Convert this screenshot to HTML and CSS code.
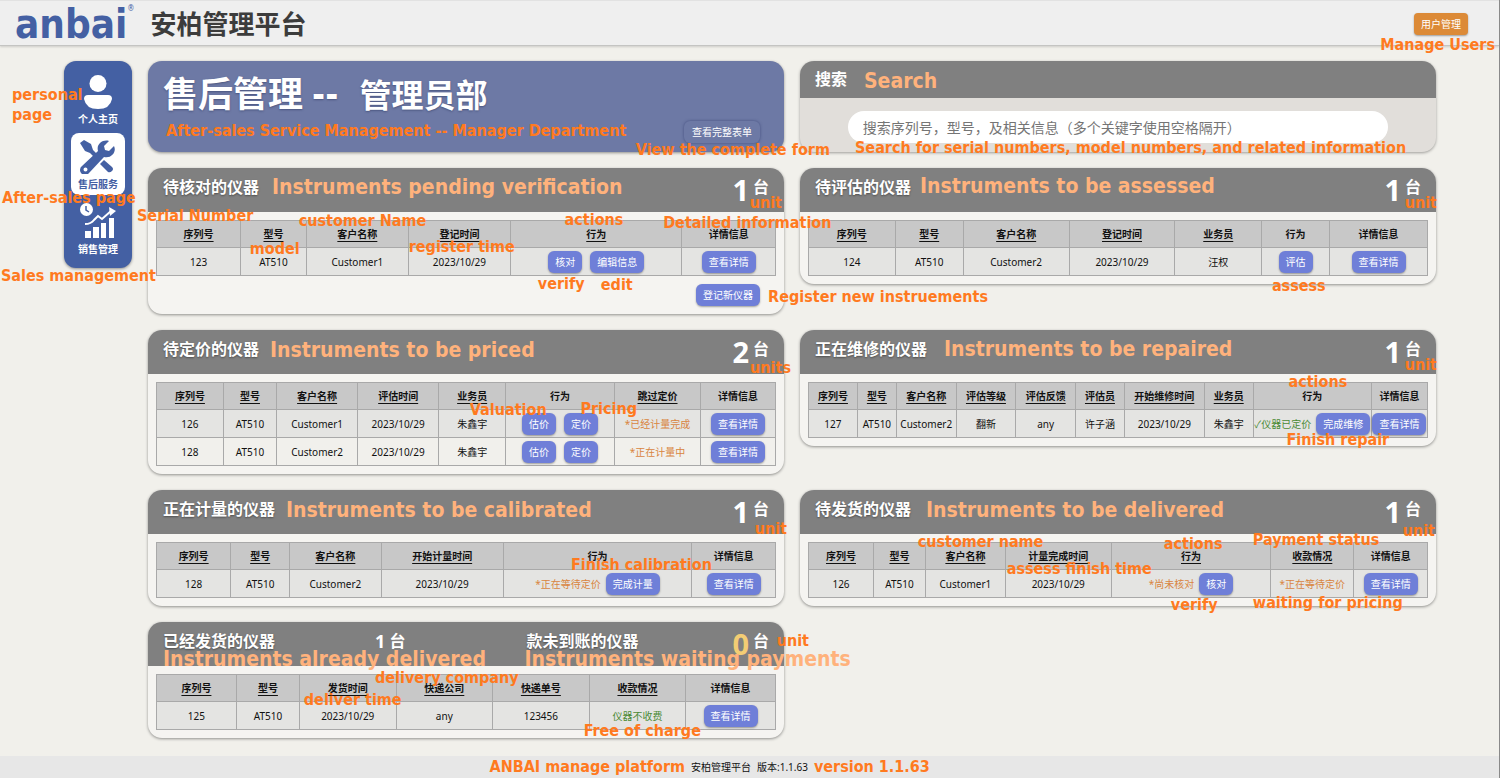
FILE: index.html
```html
<!DOCTYPE html>
<html lang="zh-CN">
<head>
<meta charset="utf-8">
<meta name="viewport" content="width=device-width, initial-scale=1">
<title>安柏管理平台</title>
<link rel="stylesheet" href="styles.css">
</head>
<body>
<header class="topbar">
  <div class="logo">anbai<span class="logo-mark">®</span></div>
  <h1 class="site-title">安柏管理平台</h1>
  <button class="btn btn-users" type="button">用户管理</button>
  <span class="note note-users">Manage Users</span>
</header>

<div class="layout">
  <nav class="sidebar">
    <a class="nav-item" href="#personal">
      <svg width="28" height="34" viewBox="0 0 28 34" fill="currentColor"><circle cx="14" cy="8.500" r="8.500"/><path d="M4 20h20q4 0 4 4-2 10-14 10T0 24q0-4 4-4z"/></svg>
      <span>个人主页</span>
    </a>
    <a class="nav-item nav-active" href="#service">
      <svg width="36" height="34" viewBox="0 0 36 34" fill="currentColor">
        <path d="M0 3l4-3 7 4 2 6 4 4-3 3-4-4-5-2z"/>
        <path d="M20 24l4-4 8 7q2 2 0 4t-4 1z"/>
        <path d="M34 6l-5 5-4-1-1-4 5-5C23-1 16 4 18 11L2 26a5 5 0 1 0 7 7l15-16c7 2 13-5 10-11zM5.500 27.500a2 2 0 1 1 0 4 2 2 0 0 1 0-4z" fill-rule="evenodd"/>
      </svg>
      <span>售后服务</span>
    </a>
    <a class="nav-item" href="#sales">
      <svg width="36" height="36" viewBox="0 0 36 36" fill="currentColor">
        <circle cx="6.500" cy="6.500" r="6.500"/><path d="M6 3v4l3 2" fill="none" stroke="#4460a3" stroke-width="1.500"/>
        <path d="M5 28h6v7H5zM13 24h6v11h-6zM21 20h5v15h-5zM29 15h5v20h-5z"/>
        <path d="M5 21q6 0 9-4l4-4 4 3 9-8" fill="none" stroke="currentColor" stroke-width="2"/><path d="M29 4l7 4-6 5z"/>
      </svg>
      <span>销售管理</span>
    </a>
    <span class="note note-personal">personal<br>page</span>
    <span class="note note-service">After-sales page</span>
    <span class="note note-sales">Sales management</span>
  </nav>

  <main class="board">
    <section class="hero">
      <h2 class="hero-title">售后管理 <span class="hero-dash">--</span> <span class="hero-dept">管理员部</span></h2>
      <button class="btn btn-form" type="button">查看完整表单</button>
      <span class="note note-hero">After-sales Service Management -- Manager Department</span>
      <span class="note note-form">View the complete form</span>
    </section>

    <section class="search">
      <label class="search-head" for="q">搜索</label>
      <div class="search-body"><input class="search-input" id="q" type="search" placeholder="搜索序列号，型号，及相关信息（多个关键字使用空格隔开）"></div>
      <span class="note note-big note-search">Search</span>
      <span class="note note-hint">Search for serial numbers, model numbers, and related information</span>
    </section>

    <section class="panel p-verify">
      <header class="panel-head"><h3>待核对的仪器</h3><p class="count"><b>1</b>台</p></header>
      <div class="panel-body">
        <table>
          <colgroup><col><col><col><col><col><col></colgroup>
          <thead><tr><th><u>序列号</u></th><th><u>型号</u></th><th><u>客户名称</u></th><th><u>登记时间</u></th><th><u>行为</u></th><th>详情信息</th></tr></thead>
          <tbody><tr><td>123</td><td>AT510</td><td>Customer1</td><td>2023/10/29</td><td><div class="actions"><button class="btn" type="button">核对</button><button class="btn" type="button">编辑信息</button></div></td><td><button class="btn" type="button">查看详情</button></td></tr></tbody>
        </table>
        <div class="panel-foot"><button class="btn" type="button">登记新仪器</button></div>
      </div>
      <span class="note note-big n-title">Instruments pending verification</span>
      <span class="note n-unit">unit</span>
      <span class="note n-serial">Serial Number</span>
      <span class="note n-model">model</span>
      <span class="note n-customer">customer Name</span>
      <span class="note n-time">register time</span>
      <span class="note n-actions">actions</span>
      <span class="note n-detail">Detailed information</span>
      <span class="note n-do">verify</span>
      <span class="note n-edit">edit</span>
      <span class="note n-register">Register new instruements</span>
    </section>

    <section class="panel p-assess">
      <header class="panel-head"><h3>待评估的仪器</h3><p class="count"><b>1</b>台</p></header>
      <div class="panel-body">
        <table>
          <colgroup><col><col><col><col><col><col><col></colgroup>
          <thead><tr><th><u>序列号</u></th><th><u>型号</u></th><th><u>客户名称</u></th><th><u>登记时间</u></th><th><u>业务员</u></th><th>行为</th><th>详情信息</th></tr></thead>
          <tbody><tr><td>124</td><td>AT510</td><td>Customer2</td><td>2023/10/29</td><td>汪权</td><td><button class="btn" type="button">评估</button></td><td><button class="btn" type="button">查看详情</button></td></tr></tbody>
        </table>
      </div>
      <span class="note note-big n-title">Instruments to be assessed</span>
      <span class="note n-unit">unit</span>
      <span class="note n-do">assess</span>
    </section>

    <section class="panel p-price">
      <header class="panel-head"><h3>待定价的仪器</h3><p class="count"><b>2</b>台</p></header>
      <div class="panel-body">
        <table>
          <colgroup><col><col><col><col><col><col><col><col></colgroup>
          <thead><tr><th><u>序列号</u></th><th><u>型号</u></th><th><u>客户名称</u></th><th><u>评估时间</u></th><th><u>业务员</u></th><th>行为</th><th><u>跳过定价</u></th><th>详情信息</th></tr></thead>
          <tbody>
            <tr><td>126</td><td>AT510</td><td>Customer1</td><td>2023/10/29</td><td>朱鑫宇</td><td><div class="actions"><button class="btn" type="button">估价</button><button class="btn" type="button">定价</button></div></td><td class="pending">*已经计量完成</td><td><button class="btn" type="button">查看详情</button></td></tr>
            <tr><td>128</td><td>AT510</td><td>Customer2</td><td>2023/10/29</td><td>朱鑫宇</td><td><div class="actions"><button class="btn" type="button">估价</button><button class="btn" type="button">定价</button></div></td><td class="pending">*正在计量中</td><td><button class="btn" type="button">查看详情</button></td></tr>
          </tbody>
        </table>
      </div>
      <span class="note note-big n-title">Instruments to be priced</span>
      <span class="note n-unit">units</span>
      <span class="note n-value">Valuation</span>
      <span class="note n-pricing">Pricing</span>
    </section>

    <section class="panel p-repair">
      <header class="panel-head"><h3>正在维修的仪器</h3><p class="count"><b>1</b>台</p></header>
      <div class="panel-body">
        <table>
          <colgroup><col><col><col><col><col><col><col><col><col><col></colgroup>
          <thead><tr><th><u>序列号</u></th><th><u>型号</u></th><th><u>客户名称</u></th><th><u>评估等级</u></th><th><u>评估反馈</u></th><th><u>评估员</u></th><th><u>开始维修时间</u></th><th><u>业务员</u></th><th>行为</th><th>详情信息</th></tr></thead>
          <tbody><tr><td>127</td><td>AT510</td><td>Customer2</td><td>翻新</td><td>any</td><td>许子涵</td><td>2023/10/29</td><td>朱鑫宇</td><td><div class="actions actions-tight"><span class="done">✓仪器已定价</span><button class="btn" type="button">完成维修</button></div></td><td><button class="btn" type="button">查看详情</button></td></tr></tbody>
        </table>
      </div>
      <span class="note note-big n-title">Instruments to be repaired</span>
      <span class="note n-unit">unit</span>
      <span class="note n-actions">actions</span>
      <span class="note n-do">Finish repair</span>
    </section>

    <section class="panel p-calibrate">
      <header class="panel-head"><h3>正在计量的仪器</h3><p class="count"><b>1</b>台</p></header>
      <div class="panel-body">
        <table>
          <colgroup><col><col><col><col><col><col></colgroup>
          <thead><tr><th><u>序列号</u></th><th><u>型号</u></th><th><u>客户名称</u></th><th><u>开始计量时间</u></th><th>行为</th><th>详情信息</th></tr></thead>
          <tbody><tr><td>128</td><td>AT510</td><td>Customer2</td><td>2023/10/29</td><td><div class="actions actions-tight"><span class="pending">*正在等待定价</span><button class="btn" type="button">完成计量</button></div></td><td><button class="btn" type="button">查看详情</button></td></tr></tbody>
        </table>
      </div>
      <span class="note note-big n-title">Instruments to be calibrated</span>
      <span class="note n-unit">unit</span>
      <span class="note n-do">Finish calibration</span>
    </section>

    <section class="panel p-deliver">
      <header class="panel-head"><h3>待发货的仪器</h3><p class="count"><b>1</b>台</p></header>
      <div class="panel-body">
        <table>
          <colgroup><col><col><col><col><col><col><col></colgroup>
          <thead><tr><th><u>序列号</u></th><th><u>型号</u></th><th><u>客户名称</u></th><th><u>计量完成时间</u></th><th><u>行为</u></th><th><u>收款情况</u></th><th>详情信息</th></tr></thead>
          <tbody><tr><td>126</td><td>AT510</td><td>Customer1</td><td>2023/10/29</td><td><div class="actions actions-tight"><span class="pending">*尚未核对</span><button class="btn" type="button">核对</button></div></td><td class="pending">*正在等待定价</td><td><button class="btn" type="button">查看详情</button></td></tr></tbody>
        </table>
      </div>
      <span class="note note-big n-title">Instruments to be delivered</span>
      <span class="note n-unit">unit</span>
      <span class="note n-customer">customer name</span>
      <span class="note n-time">assess finish time</span>
      <span class="note n-actions">actions</span>
      <span class="note n-payment">Payment status</span>
      <span class="note n-do">verify</span>
      <span class="note n-waiting">waiting for pricing</span>
    </section>

    <section class="panel p-sent">
      <header class="panel-head"><h3>已经发货的仪器</h3><p class="count count-small"><b>1</b>台</p><h3>款未到账的仪器</h3><p class="count count-zero"><b>0</b>台</p></header>
      <div class="panel-body">
        <table>
          <colgroup><col><col><col><col><col><col><col></colgroup>
          <thead><tr><th><u>序列号</u></th><th><u>型号</u></th><th><u>发货时间</u></th><th><u>快递公司</u></th><th><u>快递单号</u></th><th><u>收款情况</u></th><th>详情信息</th></tr></thead>
          <tbody><tr><td>125</td><td>AT510</td><td>2023/10/29</td><td>any</td><td>123456</td><td class="done">仪器不收费</td><td><button class="btn" type="button">查看详情</button></td></tr></tbody>
        </table>
      </div>
      <span class="note note-big n-title">Instruments already delivered</span>
      <span class="note note-big n-payments">Instruments waiting payments</span>
      <span class="note n-unit">unit</span>
      <span class="note n-company">delivery company</span>
      <span class="note n-time">deliver time</span>
      <span class="note n-free">Free of charge</span>
    </section>
  </main>
</div>

<footer class="footer">
  <span class="footer-note footer-left">ANBAI manage platform</span>
  <span class="footer-text"><span>安柏管理平台</span><span>版本:1.1.63</span></span>
  <span class="footer-note">version 1.1.63</span>
</footer>
</body>
</html>
```

FILE: styles.css
```css
* { box-sizing: border-box; }

body {
  margin: 0;
  min-height: 100vh;
  display: flex;
  flex-direction: column;
  background: #f1f0eb;
  border-right: 1px solid #8a8a8a;
  color: #111;
  font: 10px/16px "Noto Sans", "Noto Sans CJK SC", sans-serif;
}

h1, h2, h3, p { margin: 0; }

/* Top bar */
.topbar {
  position: relative;
  height: 46px;
  display: flex;
  align-items: center;
  padding: 2px 31px 0 15px;
  background: #efefef;
  border-top: 1px solid #e2e2e2;
  border-bottom: 1px solid #c4c4c2;
  box-shadow: 0 1px 2px rgba(0, 0, 0, .15);
}
.logo {
  display: flex;
  align-items: flex-start;
  color: #4460a3;
  font-family: "DejaVu Sans Condensed", "DejaVu Sans", sans-serif;
  font-size: 40px;
  font-weight: 700;
  line-height: 42px;
}
.logo-mark { font-size: 8px; line-height: 12px; font-weight: 400; }
.site-title { margin-left: 16px; color: #3c3c3c; font-size: 26px; line-height: 36px; }

/* Buttons */
.btn {
  height: 22px;
  padding: 0 7px;
  border: 0;
  border-radius: 6px;
  background: #6f7fd8;
  color: #fff;
  font: inherit;
  white-space: nowrap;
  box-shadow: 0 1px 2px rgba(0, 0, 0, .35);
  cursor: pointer;
}
.btn-users { margin-left: auto; background: #dc8a37; border-radius: 4px; }

/* Page layout */
.layout {
  flex: 1;
  display: flex;
  align-items: flex-start;
  gap: 16px;
  padding: 15px 63px 16px 64px;
}
.sidebar {
  position: relative;
  width: 68px;
  padding: 9px 7px 8px;
  display: flex;
  flex-direction: column;
  gap: 3px;
  border-radius: 12px;
  background: #4460a3;
  box-shadow: 0 1px 3px rgba(0, 0, 0, .4);
}
.nav-item {
  display: flex;
  flex-direction: column;
  align-items: center;
  gap: 2px;
  padding: 5px 0 3px;
  border-radius: 8px;
  color: #fff;
  font-weight: 700;
  text-decoration: none;
}
.nav-active { padding-top: 7px; background: #fff; color: #4460a3; }

.board {
  flex: 1;
  display: grid;
  grid-template-columns: minmax(0, 1fr) minmax(0, 1fr);
  align-items: start;
  gap: 16px;
}

/* Hero and search */
.hero {
  position: relative;
  height: 91px;
  padding: 10px 24px 9px 15px;
  display: flex;
  justify-content: space-between;
  border-radius: 14px;
  background: #6d79a5;
  box-shadow: 0 1px 3px rgba(0, 0, 0, .4);
  color: #fff;
}
.hero-title { font-size: 35px; line-height: 46px; text-shadow: 0 1px 2px rgba(40, 50, 90, .5); }
.hero-dash { font-family: "DejaVu Sans Condensed", "DejaVu Sans", sans-serif; }
.hero-dept { margin-left: 12px; font-size: 32px; }
.btn-form { align-self: flex-end; padding: 0 8px; background: #6d79a5; box-shadow: 0 0 3px rgba(50, 60, 110, .7); }

.search {
  position: relative;
  border-radius: 14px;
  background: #e1deda;
  box-shadow: 0 1px 3px rgba(0, 0, 0, .35);
}
.search-head {
  display: block;
  padding: 0 15px;
  border-radius: 14px 14px 0 0;
  background: #808080;
  color: #fff;
  font-size: 16px;
  font-weight: 700;
  line-height: 37px;
}
.search-body { display: flex; justify-content: center; padding: 13px 0 9px; }
.search-input {
  width: 85%;
  height: 32px;
  padding: 0 15px;
  border: 0;
  border-radius: 16px;
  background: #fff;
  color: #333;
  font: inherit;
  font-size: 14px;
}
.search-input::placeholder { color: #757575; }

/* Panels */
.panel {
  position: relative;
  border-radius: 14px;
  background: #f5f4f1;
  box-shadow: 0 1px 3px rgba(0, 0, 0, .4);
}
.panel-head {
  height: 44px;
  display: flex;
  align-items: flex-start;
  justify-content: space-between;
  padding: 0 15px;
  border-radius: 14px 14px 0 0;
  background: #808080;
  color: #fff;
}
.panel-head h3 { font-size: 16px; line-height: 38px; text-shadow: 0 1px 2px rgba(0, 0, 0, .4); }
.count { display: flex; gap: 4px; font-size: 16px; font-weight: 700; line-height: 38px; }
.count b { font-size: 29px; font-weight: 700; line-height: 43px; }
.p-sent .panel-head { display: grid; grid-template-columns: 35% 25% 1fr auto; }
.count-small b { font-size: 18px; line-height: 38px; }
.count-zero b { color: #f3cd74; }
.panel-body { padding: 8px; }
.panel-foot { display: flex; justify-content: flex-end; padding: 8px 16px 0 0; }

table { width: 100%; table-layout: fixed; border-collapse: collapse; }
th, td { height: 28px; padding: 0; border: 1px solid #a9a9a9; text-align: center; white-space: nowrap; }
th { height: 27px; background: #c8c8c8; font-weight: 700; }
th u { text-underline-offset: 3px; }
td { background: #f1f0ec; }
tbody tr:nth-child(odd) td { background: #e4e4e2; }
.actions { display: flex; justify-content: center; align-items: center; gap: 8px; }
.actions-tight { gap: 5px; }
td.pending, .pending { color: #d98540; }
td.done, .done { color: #4b8a34; }

/* Column widths */
.p-verify col:nth-child(1) { width: 13.600%; }
.p-verify col:nth-child(2) { width: 10.600%; }
.p-verify col:nth-child(3), .p-verify col:nth-child(4) { width: 16.500%; }
.p-verify col:nth-child(5) { width: 27.700%; }
.p-verify col:nth-child(6) { width: 15.100%; }

.p-assess col:nth-child(1), .p-assess col:nth-child(5) { width: 14%; }
.p-assess col:nth-child(2), .p-assess col:nth-child(6) { width: 11%; }
.p-assess col:nth-child(3), .p-assess col:nth-child(4) { width: 17.100%; }
.p-assess col:nth-child(7) { width: 15.800%; }

.p-price col:nth-child(1), .p-price col:nth-child(5) { width: 10.800%; }
.p-price col:nth-child(2) { width: 8.600%; }
.p-price col:nth-child(3), .p-price col:nth-child(4) { width: 13.100%; }
.p-price col:nth-child(6) { width: 17.600%; }
.p-price col:nth-child(7) { width: 13.900%; }
.p-price col:nth-child(8) { width: 12.100%; }

.p-repair col:nth-child(1), .p-repair col:nth-child(6), .p-repair col:nth-child(8) { width: 7.900%; }
.p-repair col:nth-child(2) { width: 6.300%; }
.p-repair col:nth-child(3), .p-repair col:nth-child(4), .p-repair col:nth-child(5) { width: 9.650%; }
.p-repair col:nth-child(7) { width: 12.900%; }
.p-repair col:nth-child(9) { width: 19.100%; }
.p-repair col:nth-child(10) { width: 9.050%; }

.p-calibrate col:nth-child(1) { width: 12%; }
.p-calibrate col:nth-child(2) { width: 9.500%; }
.p-calibrate col:nth-child(3) { width: 14.800%; }
.p-calibrate col:nth-child(4) { width: 19.700%; }
.p-calibrate col:nth-child(5) { width: 30.500%; }
.p-calibrate col:nth-child(6) { width: 13.500%; }

.p-deliver col:nth-child(1) { width: 10.500%; }
.p-deliver col:nth-child(2) { width: 8.400%; }
.p-deliver col:nth-child(3) { width: 12.900%; }
.p-deliver col:nth-child(4) { width: 17.100%; }
.p-deliver col:nth-child(5) { width: 25.800%; }
.p-deliver col:nth-child(6) { width: 13.400%; }
.p-deliver col:nth-child(7) { width: 11.900%; }

.p-sent col:nth-child(1) { width: 12.900%; }
.p-sent col:nth-child(2) { width: 10.200%; }
.p-sent col:nth-child(3), .p-sent col:nth-child(4), .p-sent col:nth-child(5), .p-sent col:nth-child(6) { width: 15.600%; }
.p-sent col:nth-child(7) { width: 14.500%; }

/* English captions laid over the interface */
.note, .footer-note {
  color: #ff7a1f;
  font-family: "DejaVu Sans Condensed", "DejaVu Sans", sans-serif;
  font-size: 16px;
  font-weight: 700;
  line-height: 20px;
  white-space: nowrap;
}
.note { position: absolute; z-index: 2; pointer-events: none; }
.note-big { color: #ffb27c; font-size: 21px; line-height: 26px; }

.note-users { right: 4px; top: 34px; }
.note-personal { left: -52px; top: 24px; }
.note-service { left: -62px; top: 127px; }
.note-sales { left: -63px; top: 205px; }
.note-hero { left: 18px; top: 60px; }
.note-form { left: 76.700%; top: 79px; }
.note-search { left: 64px; top: 7px; }
.note-hint { left: 55px; top: 77px; }

.panel .n-unit { right: -1px; top: 25px; }

.p-verify .n-title { left: 124px; top: 6px; }
.p-verify .n-unit { right: 2px; }
.p-verify .n-serial { left: -11px; top: 38px; }
.p-verify .n-model { left: 16%; top: 71px; }
.p-verify .n-customer { left: 23.700%; top: 43px; }
.p-verify .n-time { left: 41%; top: 69px; }
.p-verify .n-actions { left: 65.500%; top: 42px; }
.p-verify .n-detail { left: 81%; top: 45px; }
.p-verify .n-do { left: 61.300%; top: 106px; }
.p-verify .n-edit { left: 71.200%; top: 107px; }
.p-verify .n-register { left: 97.500%; top: 119px; }

.p-assess .n-title { left: 120px; top: 5px; }
.p-assess .n-do { left: 74.200%; top: 108px; }

.p-price .n-title { left: 122px; top: 7px; }
.p-price .n-unit { right: -7px; top: 28px; }
.p-price .n-value { left: 50.600%; top: 70px; }
.p-price .n-pricing { left: 68%; top: 69px; }

.p-repair .n-title { left: 144px; top: 6px; }
.p-repair .n-actions { left: 76.800%; top: 42px; }
.p-repair .n-do { left: 76.500%; top: 100px; }

.p-calibrate .n-title { left: 138px; top: 7px; }
.p-calibrate .n-unit { right: -3px; top: 29px; }
.p-calibrate .n-do { left: 66.500%; top: 65px; }

.p-deliver .n-title { left: 126px; top: 7px; }
.p-deliver .n-unit { right: 1px; top: 31px; }
.p-deliver .n-customer { left: 18.500%; top: 42px; }
.p-deliver .n-time { left: 32.500%; top: 69px; }
.p-deliver .n-actions { left: 57.200%; top: 44px; }
.p-deliver .n-payment { left: 71.200%; top: 40px; }
.p-deliver .n-do { left: 58.300%; top: 105px; }
.p-deliver .n-waiting { left: 71.200%; top: 103px; }

.p-sent .n-title { left: 15px; top: 24px; }
.p-sent .n-payments { left: 59.200%; top: 24px; }
.p-sent .n-unit { right: -25px; top: 9px; }
.p-sent .n-company { left: 35.700%; top: 46px; }
.p-sent .n-time { left: 24.500%; top: 68px; }
.p-sent .n-free { left: 68.500%; top: 99px; }

/* Footer */
.footer {
  display: grid;
  grid-template-columns: 1fr auto 1fr;
  align-items: center;
  gap: 6px;
  height: 22px;
  background: #e7e7e7;
}
.footer-left { text-align: right; }
.footer-text { display: flex; gap: 6px; }
```
